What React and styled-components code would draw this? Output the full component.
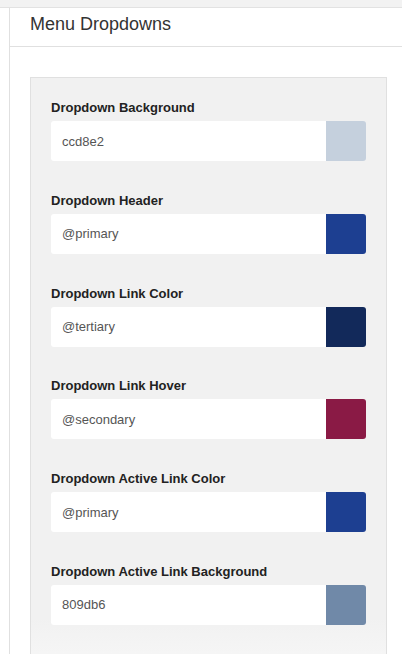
import React from "react";
import styled, { createGlobalStyle } from "styled-components";

const GlobalStyle = createGlobalStyle`
  body {
    margin: 0;
    background: #fff;
    font-family: "Liberation Sans", Arial, sans-serif;
  }
`;

const TopBar = styled.div`
  height: 7px;
  background: #f2f2f2;
  border-bottom: 1px solid #e2e2e2;
`;

const Main = styled.div`
  margin-left: 9px;
  border-left: 1px solid #e0e0e0;
  min-height: 646px;
`;

const Heading = styled.h2`
  margin: 0;
  height: 38px;
  padding: 0 0 0 20px;
  font-size: 18px;
  font-weight: normal;
  color: #333;
  line-height: 33px;
  border-bottom: 1px solid #e0e0e0;
`;

const Body = styled.div`
  padding: 30px 15px 0 20px;
`;

const Box = styled.div`
  background: #f1f1f1;
  border: 1px solid #e0e0e0;
  border-bottom: none;
  padding: 21px 20px 40px 20px;
  background-image: linear-gradient(to bottom, #f1f1f1 540px, #f8f8f8 600px);
`;

const Field = styled.div`
  margin-bottom: 30.8px;
`;

const Label = styled.div`
  font-size: 13px;
  font-weight: bold;
  color: #222;
  line-height: 18px;
  margin-bottom: 4px;
`;

const InputRow = styled.div`
  display: flex;
  height: 40px;
`;

const Input = styled.div`
  flex: 1;
  background: #fff;
  border-radius: 3px 0 0 3px;
  display: flex;
  align-items: center;
  padding-left: 11px;
  font-size: 13px;
  color: #555;
`;

const Swatch = styled.div`
  width: 40px;
  background: ${(props) => props.color};
  border-radius: 0 3px 3px 0;
`;

const fields = [
  { label: "Dropdown Background", value: "ccd8e2", color: "#c5d0dd" },
  { label: "Dropdown Header", value: "@primary", color: "#1d3f91" },
  { label: "Dropdown Link Color", value: "@tertiary", color: "#12295a" },
  { label: "Dropdown Link Hover", value: "@secondary", color: "#8a1a45" },
  { label: "Dropdown Active Link Color", value: "@primary", color: "#1d3f91" },
  { label: "Dropdown Active Link Background", value: "809db6", color: "#7089a8" },
];

const App = () => {
  return (
    <>
      <GlobalStyle />
      <TopBar />
      <Main>
        <Heading>Menu Dropdowns</Heading>
        <Body>
          <Box>
            {fields.map((f) => (
              <Field key={f.label}>
                <Label>{f.label}</Label>
                <InputRow>
                  <Input>{f.value}</Input>
                  <Swatch color={f.color} />
                </InputRow>
              </Field>
            ))}
          </Box>
        </Body>
      </Main>
    </>
  );
};

export default App;
